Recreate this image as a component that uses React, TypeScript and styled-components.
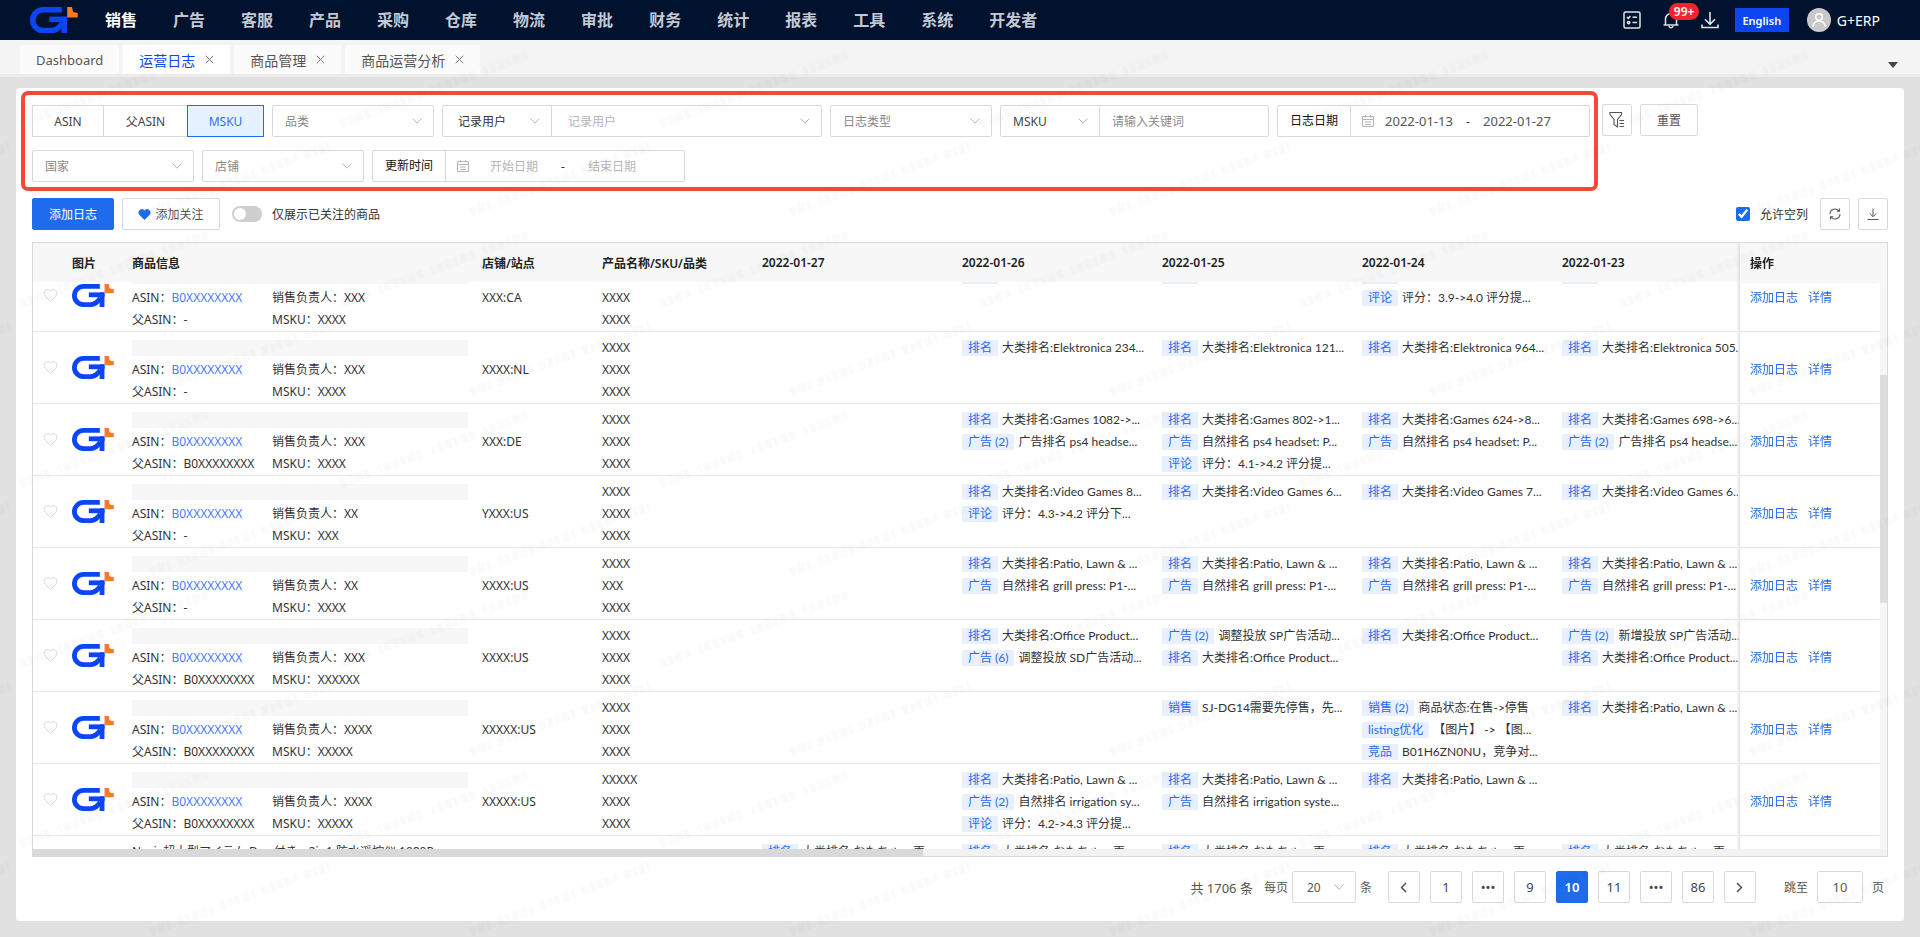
import React, { useLayoutEffect, useRef } from 'react';
import styled, { createGlobalStyle, css } from 'styled-components';

const SANS = '"Noto Sans", "Noto Sans CJK SC", sans-serif';
const LOG_SANS = 'Lato, "Noto Sans CJK SC", sans-serif';
const BLUE = '#1f6bee';
const LINE = '#d9d9d9';

const GlobalStyle = createGlobalStyle`
  *, *::before, *::after { box-sizing: border-box; }
  body {
    margin: 0;
    background: #e1e1e1;
    color: #333;
    font-family: ${SANS};
    font-size: 12px;
  }
  button, input, select { font: inherit; color: inherit; margin: 0; }
  button { cursor: pointer; padding: 0; }
  a { text-decoration: none; }
`;

const Page = styled.div`
  display: flex;
  flex-direction: column;
  height: 100vh;
`;

/* ---------- top bar ---------- */

const TopBar = styled.header`
  display: flex;
  align-items: center;
  flex: none;
  height: 40px;
  padding: 0 40px 0 30px;
  background: #00122e;
`;

const Nav = styled.nav`
  display: flex;
  gap: 36px;
  margin-left: 27px;
`;

const NavLink = styled.a<{ $active?: boolean }>`
  color: ${(p) => (p.$active ? '#fff' : '#c3c9d3')};
  font-size: 16px;
  font-weight: ${(p) => (p.$active ? 700 : 600)};
  line-height: 24px;
`;

const TopActions = styled.div`
  display: flex;
  align-items: center;
  gap: 13px;
  margin-left: auto;
`;

const TopIcons = styled.div`
  display: flex;
  gap: 15px;
`;

const TopIcon = styled.button`
  display: flex;
  position: relative;
  width: 24px;
  justify-content: center;
  border: 0;
  background: none;
  color: #dfe3ea;
`;

const Badge = styled.span`
  position: absolute;
  left: 10px;
  top: -8px;
  padding: 0 5px;
  border-radius: 9px;
  background: #f5222d;
  color: #fff;
  font-size: 12px;
  font-weight: 600;
  line-height: 17px;
`;

const LangButton = styled.button`
  width: 54px;
  height: 24px;
  border: 0;
  background: #0b46f0;
  color: #fff;
  font-size: 11px;
  font-weight: 600;
`;

const User = styled.div`
  display: flex;
  align-items: center;
  gap: 6px;
  margin-left: 5px;
  color: #fff;
  font-size: 14px;
`;

/* ---------- page tabs ---------- */

const TabBar = styled.div`
  display: flex;
  align-items: flex-end;
  gap: 4px;
  flex: none;
  height: 37px;
  padding: 0 20px;
  border-bottom: 3px solid #ececec;
  background: #f4f4f4;
`;

const Tab = styled.a<{ $active?: boolean; $plain?: boolean }>`
  display: flex;
  align-items: center;
  gap: 10px;
  height: 29px;
  padding: 0 16px;
  background: ${(p) => (p.$active ? '#fff' : '#fbfbfb')};
  color: ${(p) => (p.$active ? '#1044f0' : '#555')};
  font-size: ${(p) => (p.$plain ? 13 : 14)}px;
`;

const TabMenu = styled.button`
  display: flex;
  margin: 0 2px 6px auto;
  border: 0;
  background: none;
  color: #444;
`;

/* ---------- content card ---------- */

const Card = styled.main`
  display: flex;
  flex-direction: column;
  flex: 1;
  min-height: 0;
  margin: 11px 16px 16px;
  padding: 3px 16px 18px;
  border-radius: 4px;
  background: #fff;
`;

const FilterArea = styled.div`
  display: flex;
  align-items: flex-start;
  gap: 4px;
  margin-left: -11px;
`;

const FilterFrame = styled.form`
  display: flex;
  flex-wrap: wrap;
  gap: 13px 8px;
  flex: 0 1 1577px;
  padding: 10px 4px 5px 7px;
  border: 4px solid #f5483a;
  border-radius: 7px;
`;

const FilterSide = styled.div`
  display: flex;
  gap: 8px;
  flex: none;
  padding-top: 13px;
`;

const Segments = styled.div`
  display: flex;
`;

const Segment = styled.button<{ $active?: boolean; $width: number }>`
  width: ${(p) => p.$width}px;
  height: 32px;
  border: 1px solid ${LINE};
  border-right-width: 0;
  background: #fff;
  color: #444;
  ${(p) =>
    p.$active &&
    css`
      border: 1px solid ${BLUE};
      background: #e6f2ff;
      color: #3a6bf0;
    `}
`;

const Group = styled.div<{ $width: number }>`
  display: flex;
  width: ${(p) => p.$width}px;
  height: 32px;
  border: 1px solid ${LINE};
  border-radius: 2px;
  background: #fff;
`;

const SelectBox = styled.span<{ $width?: number; $divided?: boolean }>`
  position: relative;
  display: flex;
  align-items: center;
  flex: ${(p) => (p.$width ? `0 0 ${p.$width}px` : '1')};
  min-width: 0;
  border-right: ${(p) => (p.$divided ? `1px solid ${LINE}` : '0')};
`;

const SelectControl = styled.select<{ $tone?: string; $indent?: number }>`
  appearance: none;
  width: 100%;
  height: 100%;
  padding: 0 24px 0 ${(p) => p.$indent ?? 12}px;
  border: 0;
  outline: 0;
  background: transparent;
  color: ${(p) => p.$tone ?? '#888'};
`;

const ChevronSlot = styled.span`
  position: absolute;
  right: 11px;
  top: 50%;
  margin-top: -3px;
  display: flex;
  pointer-events: none;
  color: #b5b5b5;
`;

const TextInput = styled.input`
  flex: 1;
  min-width: 0;
  padding: 0 12px;
  border: 0;
  outline: 0;
  background: transparent;
  &::placeholder { color: #8c8c8c; }
`;

const GroupLabel = styled.label`
  flex: 0 0 73px;
  border-right: 1px solid ${LINE};
  color: #111;
  line-height: 30px;
  text-align: center;
`;

const RangeInputs = styled.div`
  display: flex;
  align-items: center;
  padding-left: 10px;
  color: #b5b5b5;
`;

const DateInput = styled.input`
  width: 88px;
  padding: 0;
  border: 0;
  outline: 0;
  background: transparent;
  color: #555;
  font-size: 13px;
  text-align: center;
  &::placeholder { color: #b5b5b5; font-size: 12px; }
`;

const Dash = styled.span`
  width: 10px;
  color: #333;
  text-align: center;
`;

const Button = styled.button<{ $primary?: boolean; $width: number }>`
  display: flex;
  align-items: center;
  justify-content: center;
  gap: 4px;
  width: ${(p) => p.$width}px;
  height: 32px;
  border: 1px solid ${(p) => (p.$primary ? BLUE : LINE)};
  border-radius: 2px;
  background: ${(p) => (p.$primary ? BLUE : '#fff')};
  color: ${(p) => (p.$primary ? '#fff' : '#555')};
`;

const Toolbar = styled.div`
  display: flex;
  align-items: center;
  gap: 8px;
  flex: none;
  margin: 7px 0 12px;
`;

const Check = styled.label`
  display: flex;
  align-items: center;
  gap: 10px;
  color: #333;
`;

const SwitchInput = styled.input`
  appearance: none;
  position: relative;
  width: 30px;
  height: 16px;
  margin-left: 4px;
  border-radius: 8px;
  background: #cfcfcf;
  &::after {
    content: '';
    position: absolute;
    left: 2px;
    top: 2px;
    width: 12px;
    height: 12px;
    border-radius: 50%;
    background: #fff;
  }
`;

const CheckInput = styled.input`
  width: 14px;
  height: 14px;
  accent-color: ${BLUE};
`;

const ToolbarEnd = styled.div`
  display: flex;
  align-items: center;
  gap: 8px;
  margin-left: auto;
  & > label { margin-right: 4px; }
`;

/* ---------- table ---------- */

const TableFrame = styled.section`
  display: grid;
  grid-template: minmax(0, 1fr) 7px / minmax(0, 1fr) 7px;
  flex: 1;
  min-height: 0;
  border: 1px solid ${LINE};
`;

const Scroller = styled.div`
  overflow: auto;
  scrollbar-width: none;
`;

const Table = styled.table`
  width: 100%;
  min-width: 1859px;
  table-layout: fixed;
  border-collapse: separate;
  border-spacing: 0;
`;

const Th = styled.th<{ $fixed?: boolean }>`
  position: sticky;
  top: 0;
  z-index: ${(p) => (p.$fixed ? 3 : 2)};
  height: 39px;
  padding: 0 10px;
  background: #f7f7f7;
  color: #222;
  font-weight: 600;
  text-align: left;
  ${(p) => p.$fixed && css`right: 0; box-shadow: -2px 0 2px #e0e0e0;`}
`;

const Td = styled.td<{ $middle?: boolean; $fixed?: boolean }>`
  height: 72px;
  padding: 5px 10px 0;
  border-bottom: 1px solid #e8e8e8;
  background: #fff;
  line-height: 22px;
  white-space: nowrap;
  vertical-align: ${(p) => (p.$middle ? 'middle' : 'top')};
  ${(p) => p.$fixed && css`position: sticky; right: 0; z-index: 1; box-shadow: -2px 0 2px #e4e4e4;`}
`;

const IconTd = styled(Td)`
  padding: 0 0 0 10px;
  line-height: 0;
`;

const LikeButton = styled.button`
  border: 0;
  background: none;
  color: #d5d5d5;
`;

const InfoGrid = styled.div`
  display: grid;
  grid-template-columns: 140px 1fr;
  grid-auto-rows: 22px;
  margin-right: -6px;
`;

const Title = styled.span`
  grid-column: 1 / -1;
`;

const TitleBlank = styled(Title)`
  align-self: center;
  height: 16px;
  background: #f7f7f7;
`;

const AsinLink = styled.a`
  color: #4b7bf5;
`;

const LogLine = styled.div`
  display: flex;
  align-items: center;
  gap: 4px;
  height: 22px;
  font-family: ${LOG_SANS};
`;

const Tag = styled.span`
  padding: 0 6px;
  border-radius: 2px;
  background: #e8f0fe;
  color: #2a6bee;
  line-height: 16px;
`;

const Ops = styled.div`
  display: flex;
  gap: 10px;
  & > a { color: #2468ee; }
`;

const VTrack = styled.div`
  padding-top: 132px;
  background: linear-gradient(#f7f7f7 39px, #f6f6f6 39px);
`;

const VThumb = styled.div`
  height: 48%;
  background: #dedede;
`;

const HTrack = styled.div`
  grid-column: 1 / -1;
  background: #f2f2f2;
`;

const HThumb = styled.div`
  width: 48%;
  height: 100%;
  background: #d9d9d9;
`;

/* ---------- pagination ---------- */

const Pager = styled.footer`
  display: flex;
  align-items: center;
  justify-content: flex-end;
  flex: none;
  margin-top: 14px;
  padding-right: 4px;
  color: #555;
`;

const Total = styled.span`
  margin-right: 11px;
  font-size: 13px;
`;

const PageSize = styled.label`
  display: flex;
  align-items: center;
  gap: 4px;
  margin-right: 16px;
`;

const PageList = styled.div`
  display: flex;
  gap: 10px;
`;

const PageButton = styled.button<{ $active?: boolean }>`
  display: flex;
  align-items: center;
  justify-content: center;
  width: 32px;
  height: 32px;
  border: 1px solid ${(p) => (p.$active ? BLUE : LINE)};
  border-radius: 2px;
  background: ${(p) => (p.$active ? BLUE : '#fff')};
  color: ${(p) => (p.$active ? '#fff' : '#444')};
  font-size: 13px;
  font-weight: ${(p) => (p.$active ? 600 : 400)};
`;

const Jump = styled.label`
  display: flex;
  align-items: center;
  gap: 9px;
  margin-left: 28px;
`;

const JumpInput = styled.input`
  width: 46px;
  height: 32px;
  border: 1px solid ${LINE};
  border-radius: 2px;
  font-size: 13px;
  text-align: center;
`;

const Watermark = styled.svg`
  position: fixed;
  inset: 40px 0 0 0;
  width: 100%;
  height: calc(100% - 40px);
  z-index: 10;
  pointer-events: none;
`;

/* ---------- drawings ---------- */

const Logo = ({ width }: { width: number }) => (
  <svg width={width} viewBox="0 0 40 22" role="img" aria-label="G+ERP">
    <g fill="none" stroke="#0b45f5" strokeWidth="4.6">
      <path d="M26.5 2.3H11A8.7 8.7 0 0 0 11 19.700H17.500C21 19.700 24 18 27 13.500" />
      <path d="M16 10.300H31" />
      <path d="M28.600 8V22" />
    </g>
    <path d="M31 0H35L36 4.200L39.800 5V8.800H31Z" fill="#f47a28" />
  </svg>
);

const Chevron = () => (
  <svg width="10" height="6" viewBox="0 0 10 6" fill="none" stroke="currentColor">
    <path d="M.5.5 5 5.2 9.5.5" />
  </svg>
);

const Calendar = () => (
  <svg width="14" height="14" viewBox="0 0 14 14" fill="none" stroke="currentColor">
    <path d="M1.5 2.5h11v10h-11zM1.5 5.5h11M4.5 1v2.5M9.5 1v2.5M4 8h6M4 10.5h6" />
  </svg>
);

const Cross = () => (
  <svg width="9" height="9" viewBox="0 0 9 9" fill="none" stroke="#777">
    <path d="m.8.8 7.4 7.4M8.2.8.8 8.2" />
  </svg>
);

const HEART = 'M8 14.2 2.3 8.6C.6 6.9.7 4.2 2.4 2.7 4 1.3 6.4 1.5 8 3.3c1.6-1.8 4-2 5.6-.6 1.7 1.5 1.8 4.2.1 5.9Z';

const Heart = ({ size, filled }: { size: number; filled?: boolean }) => (
  <svg
    width={size}
    height={size}
    viewBox="0 0 16 16"
    fill={filled ? BLUE : 'none'}
    stroke={filled ? BLUE : 'currentColor'}
  >
    <path d={HEART} />
  </svg>
);

const TaskIcon = () => (
  <svg width="18" height="18" viewBox="0 0 18 18" fill="none" stroke="currentColor" strokeWidth="1.5">
    <rect x="1" y="1" width="16" height="16" rx="1.5" />
    <path d="m4 6 1.3 1.3L7.4 5M9.5 6.3H14M9.5 11.5H14" />
    <circle cx="5.6" cy="11.6" r="1.2" />
  </svg>
);

const BellIcon = () => (
  <svg width="18" height="18" viewBox="0 0 18 18" fill="none" stroke="currentColor" strokeWidth="1.5">
    <path d="M1.5 14h15M3.5 14V8a5.5 5.5 0 0 1 11 0v6M9 1v1.5M7 15c.3 2.200 3.700 2.200 4 0" />
  </svg>
);

const DownloadIcon = ({ size }: { size: number }) => (
  <svg width={size} height={size} viewBox="0 0 18 18" fill="none" stroke="currentColor" strokeWidth="1.6">
    <path d="M9 1v12M4 8.300 9 13.300l5-5M1 13.500V16.500h16V13.500" />
  </svg>
);

const ExportIcon = () => (
  <svg width="14" height="14" viewBox="0 0 14 14" fill="none" stroke="currentColor">
    <path d="M7 1.500v8M3.800 6.500 7 9.700l3.200-3.200M1.500 12.500h11" />
  </svg>
);

const RefreshIcon = () => (
  <svg width="14" height="14" viewBox="0 0 14 14" fill="none" stroke="currentColor" strokeWidth="1.1">
    <path d="M2 7a5 5 0 0 1 9-3M12 7a5 5 0 0 1-9 3M11.500 1.500V4.300H8.800M2.500 12.500V9.700h2.700" />
  </svg>
);

const FilterIcon = () => (
  <svg width="16" height="18" viewBox="0 0 16 18" fill="none" stroke="currentColor" strokeWidth="1.1">
    <path d="M1 1.500h11.500v2L8.500 8.500V16L5 13.500v-5L1 3.500ZM10.500 9.500H15M10.500 12.500H15M10.500 15.500H15" />
  </svg>
);

const Avatar = () => (
  <svg width="24" height="24" viewBox="0 0 24 24" fill="none" stroke="#fff" strokeWidth="1.5">
    <circle cx="12" cy="12" r="12" fill="#c9c9c9" stroke="none" />
    <circle cx="12" cy="9" r="3.300" />
    <path d="M6 18.500c.5-7.500 11.500-7.500 12 0" />
  </svg>
);

const Arrow = ({ next }: { next?: boolean }) => (
  <svg width="7" height="11" viewBox="0 0 7 11" fill="none" stroke="currentColor" strokeWidth="1.4">
    <path d={next ? 'm1 1 4.500 4.500L1 10' : 'M6 1 1.500 5.500 6 10'} />
  </svg>
);

/* ---------- data ---------- */

type Log = [tag: string, text: string];
type Product = {
  title?: string;
  parent: string;
  owner: string;
  msku: string;
  store: string;
  names: string[];
  logs: Log[][];
};

const rank = (text: string): Log => ['排名', `大类排名:${text}`];
const X4 = ['XXXX', 'XXXX', 'XXXX'];
const PARENT = 'B0XXXXXXXX';
const PATIO = rank('Patio, Lawn & ...');
const OFFICE = rank('Office Product...');
const GRILL: Log = ['广告', '自然排名 grill press: P1-...'];

const PRODUCTS: Product[] = [
  {
    parent: '-', owner: 'XXX', msku: 'XXXX', store: 'XXX:CA', names: X4,
    logs: [[], [PATIO], [PATIO], [PATIO, ['评论', '评分：3.9->4.0 评分提...']], [PATIO]],
  },
  {
    parent: '-', owner: 'XXX', msku: 'XXXX', store: 'XXXX:NL', names: X4,
    logs: [[], [rank('Elektronica 234...')], [rank('Elektronica 121...')], [rank('Elektronica 964...')], [rank('Elektronica 505...')]],
  },
  {
    parent: PARENT, owner: 'XXX', msku: 'XXXX', store: 'XXX:DE', names: X4,
    logs: [
      [],
      [rank('Games 1082->...'), ['广告 (2)', '广告排名 ps4 headse...']],
      [rank('Games 802->1...'), ['广告', '自然排名 ps4 headset: P...'], ['评论', '评分：4.1->4.2 评分提...']],
      [rank('Games 624->8...'), ['广告', '自然排名 ps4 headset: P...']],
      [rank('Games 698->6...'), ['广告 (2)', '广告排名 ps4 headse...']],
    ],
  },
  {
    parent: '-', owner: 'XX', msku: 'XXX', store: 'YXXX:US', names: X4,
    logs: [
      [],
      [rank('Video Games 8...'), ['评论', '评分：4.3->4.2 评分下...']],
      [rank('Video Games 6...')],
      [rank('Video Games 7...')],
      [rank('Video Games 6...')],
    ],
  },
  {
    parent: '-', owner: 'XX', msku: 'XXXX', store: 'XXXX:US', names: ['XXXX', 'XXX', 'XXXX'],
    logs: [[], [PATIO, GRILL], [PATIO, GRILL], [PATIO, GRILL], [PATIO, GRILL]],
  },
  {
    parent: PARENT, owner: 'XXX', msku: 'XXXXXX', store: 'XXXX:US', names: X4,
    logs: [
      [],
      [OFFICE, ['广告 (6)', '调整投放 SD广告活动...']],
      [['广告 (2)', '调整投放 SP广告活动...'], OFFICE],
      [OFFICE],
      [['广告 (2)', '新增投放 SP广告活动...'], OFFICE],
    ],
  },
  {
    parent: PARENT, owner: 'XXXX', msku: 'XXXXX', store: 'XXXXX:US', names: X4,
    logs: [
      [],
      [],
      [['销售', 'SJ-DG14需要先停售，先...']],
      [['销售 (2)', '商品状态:在售->停售'], ['listing优化', '【图片】 -> 【图...'], ['竞品', 'B01H6ZN0NU，竞争对...']],
      [PATIO],
    ],
  },
  {
    parent: PARENT, owner: 'XXXX', msku: 'XXXXX', store: 'XXXXX:US', names: ['XXXXX', 'XXXX', 'XXXX'],
    logs: [
      [],
      [PATIO, ['广告 (2)', '自然排名 irrigation sy...'], ['评论', '评分：4.2->4.3 评分提...']],
      [PATIO, ['广告', '自然排名 irrigation syste...']],
      [PATIO],
      [],
    ],
  },
  {
    title: 'Nacix超大型アイテム Dec 付き、2in1 防水遥控仪 1080P',
    parent: '-', owner: 'XXXX', msku: 'XXXX', store: 'XXXX:JP', names: ['', '', ''],
    logs: Array.from({ length: 5 }, () => [rank('おもちゃ、更')]),
  },
];

const NAV = ['销售', '广告', '客服', '产品', '采购', '仓库', '物流', '审批', '财务', '统计', '报表', '工具', '系统', '开发者'];
const TABS = ['运营日志', '商品管理', '商品运营分析'];
const DATES = ['2022-01-27', '2022-01-26', '2022-01-25', '2022-01-24', '2022-01-23'];
const PAGES = ['1', '•••', '9', '10', '11', '•••', '86'];
const COLUMNS = [29, 60, 350, 120, 160, 200, 200, 200, 200, 200, 140];

/* ---------- parts ---------- */

type PickerProps = { label: string; width?: number; divided?: boolean; tone?: string; indent?: number };

const Picker = ({ label, width, divided, tone, indent }: PickerProps) => (
  <SelectBox $width={width} $divided={divided}>
    <SelectControl aria-label={label} $tone={tone} $indent={indent}>
      <option>{label}</option>
    </SelectControl>
    <ChevronSlot><Chevron /></ChevronSlot>
  </SelectBox>
);

const SinglePicker = ({ label }: { label: string }) => (
  <Group $width={162}><Picker label={label} /></Group>
);

type RangeProps = { id: string; label: string; from?: string; to?: string };

const DateRange = ({ id, label, from, to }: RangeProps) => (
  <Group $width={313}>
    <GroupLabel htmlFor={id}>{label}</GroupLabel>
    <RangeInputs>
      <Calendar />
      <DateInput id={id} defaultValue={from} placeholder="开始日期" />
      <Dash>-</Dash>
      <DateInput aria-label={`${label}结束`} defaultValue={to} placeholder="结束日期" />
    </RangeInputs>
  </Group>
);

const ProductRow = ({ product }: { product: Product }) => (
  <tr>
    <IconTd $middle>
      <LikeButton aria-label="关注"><Heart size={15} /></LikeButton>
    </IconTd>
    <IconTd $middle><Logo width={42} /></IconTd>
    <Td>
      <InfoGrid>
        {product.title ? <Title>{product.title}</Title> : <TitleBlank />}
        <span>ASIN：<AsinLink href="#asin">B0XXXXXXXX</AsinLink></span>
        <span>销售负责人：{product.owner}</span>
        <span>父ASIN：{product.parent}</span>
        <span>MSKU：{product.msku}</span>
      </InfoGrid>
    </Td>
    <Td $middle>{product.store}</Td>
    <Td>{product.names.map((name, i) => <div key={i}>{name}</div>)}</Td>
    {product.logs.map((logs, i) => (
      <Td key={i}>
        {logs.map(([tag, text]) => (
          <LogLine key={tag}><Tag>{tag}</Tag><span>{text}</span></LogLine>
        ))}
      </Td>
    ))}
    <Td $middle $fixed>
      <Ops><a href="#add">添加日志</a><a href="#detail">详情</a></Ops>
    </Td>
  </tr>
);

export default function App() {
  const scroller = useRef<HTMLDivElement>(null);

  useLayoutEffect(() => {
    if (scroller.current) scroller.current.scrollTop = 22;
  }, []);

  return (
    <Page>
      <GlobalStyle />
      <TopBar>
        <Logo width={48} />
        <Nav>
          {NAV.map((item, i) => <NavLink key={item} href="#nav" $active={i === 0}>{item}</NavLink>)}
        </Nav>
        <TopActions>
          <TopIcons>
            <TopIcon aria-label="任务"><TaskIcon /></TopIcon>
            <TopIcon aria-label="通知"><BellIcon /><Badge>99+</Badge></TopIcon>
            <TopIcon aria-label="下载"><DownloadIcon size={18} /></TopIcon>
          </TopIcons>
          <LangButton>English</LangButton>
          <User><Avatar />G+ERP</User>
        </TopActions>
      </TopBar>

      <TabBar>
        <Tab href="#dashboard" $plain>Dashboard</Tab>
        {TABS.map((tab, i) => <Tab key={tab} href="#tab" $active={i === 0}>{tab}<Cross /></Tab>)}
        <TabMenu aria-label="更多标签">
          <svg width="10" height="6" viewBox="0 0 10 6"><path d="M0 0h10L5 6Z" fill="currentColor" /></svg>
        </TabMenu>
      </TabBar>

      <Card>
        <FilterArea>
          <FilterFrame>
            <Segments>
              <Segment type="button" $width={71}>ASIN</Segment>
              <Segment type="button" $width={84}>父ASIN</Segment>
              <Segment type="button" $width={77} $active>MSKU</Segment>
            </Segments>
            <SinglePicker label="品类" />
            <Group $width={380}>
              <Picker label="记录用户" width={109} divided tone="#333" indent={15} />
              <Picker label="记录用户" tone="#b5b5b5" indent={16} />
            </Group>
            <SinglePicker label="日志类型" />
            <Group $width={269}>
              <Picker label="MSKU" width={99} divided tone="#444" />
              <TextInput aria-label="关键词" placeholder="请输入关键词" />
            </Group>
            <DateRange id="log-date" label="日志日期" from="2022-01-13" to="2022-01-27" />
            <SinglePicker label="国家" />
            <SinglePicker label="店铺" />
            <DateRange id="update-date" label="更新时间" />
          </FilterFrame>
          <FilterSide>
            <Button $width={30} aria-label="筛选设置"><FilterIcon /></Button>
            <Button $width={58}>重置</Button>
          </FilterSide>
        </FilterArea>

        <Toolbar>
          <Button $primary $width={82}>添加日志</Button>
          <Button $width={98}><Heart size={13} filled />添加关注</Button>
          <Check><SwitchInput type="checkbox" role="switch" />仅展示已关注的商品</Check>
          <ToolbarEnd>
            <Check><CheckInput type="checkbox" defaultChecked />允许空列</Check>
            <Button $width={30} aria-label="刷新"><RefreshIcon /></Button>
            <Button $width={30} aria-label="导出"><ExportIcon /></Button>
          </ToolbarEnd>
        </Toolbar>

        <TableFrame>
          <Scroller ref={scroller}>
            <Table>
              <colgroup>
                {COLUMNS.map((width, i) => <col key={i} width={width} />)}
              </colgroup>
              <thead>
                <tr>
                  <Th />
                  <Th>图片</Th>
                  <Th>商品信息</Th>
                  <Th>店铺/站点</Th>
                  <Th>产品名称/SKU/品类</Th>
                  {DATES.map((date) => <Th key={date}>{date}</Th>)}
                  <Th $fixed>操作</Th>
                </tr>
              </thead>
              <tbody>
                {PRODUCTS.map((product, i) => <ProductRow key={i} product={product} />)}
              </tbody>
            </Table>
          </Scroller>
          <VTrack><VThumb /></VTrack>
          <HTrack><HThumb /></HTrack>
        </TableFrame>

        <Pager>
          <Total>共 1706 条</Total>
          <PageSize>
            每页
            <Group $width={64}><Picker label="20" tone="#555" indent={14} /></Group>
            条
          </PageSize>
          <PageList>
            <PageButton aria-label="上一页"><Arrow /></PageButton>
            {PAGES.map((page, i) => <PageButton key={i} $active={page === '10'}>{page}</PageButton>)}
            <PageButton aria-label="下一页"><Arrow next /></PageButton>
          </PageList>
          <Jump>跳至<JumpInput defaultValue="10" />页</Jump>
        </Pager>
      </Card>

      <Watermark aria-hidden="true">
        <defs>
          <pattern id="marks" width="320" height="180" patternUnits="userSpaceOnUse">
            <g fill="none" stroke="#000" strokeOpacity=".016" strokeWidth="9">
              <path d="M20 84 210 14" strokeDasharray="7 2 5 2 8 2 6 9 4 2 7 2" />
              <path d="M150 172 330 106M-170 172 10 106" strokeDasharray="6 2 8 2 4 7 7 2 5 2" />
            </g>
          </pattern>
        </defs>
        <rect width="100%" height="100%" fill="url(#marks)" />
      </Watermark>
    </Page>
  );
}
